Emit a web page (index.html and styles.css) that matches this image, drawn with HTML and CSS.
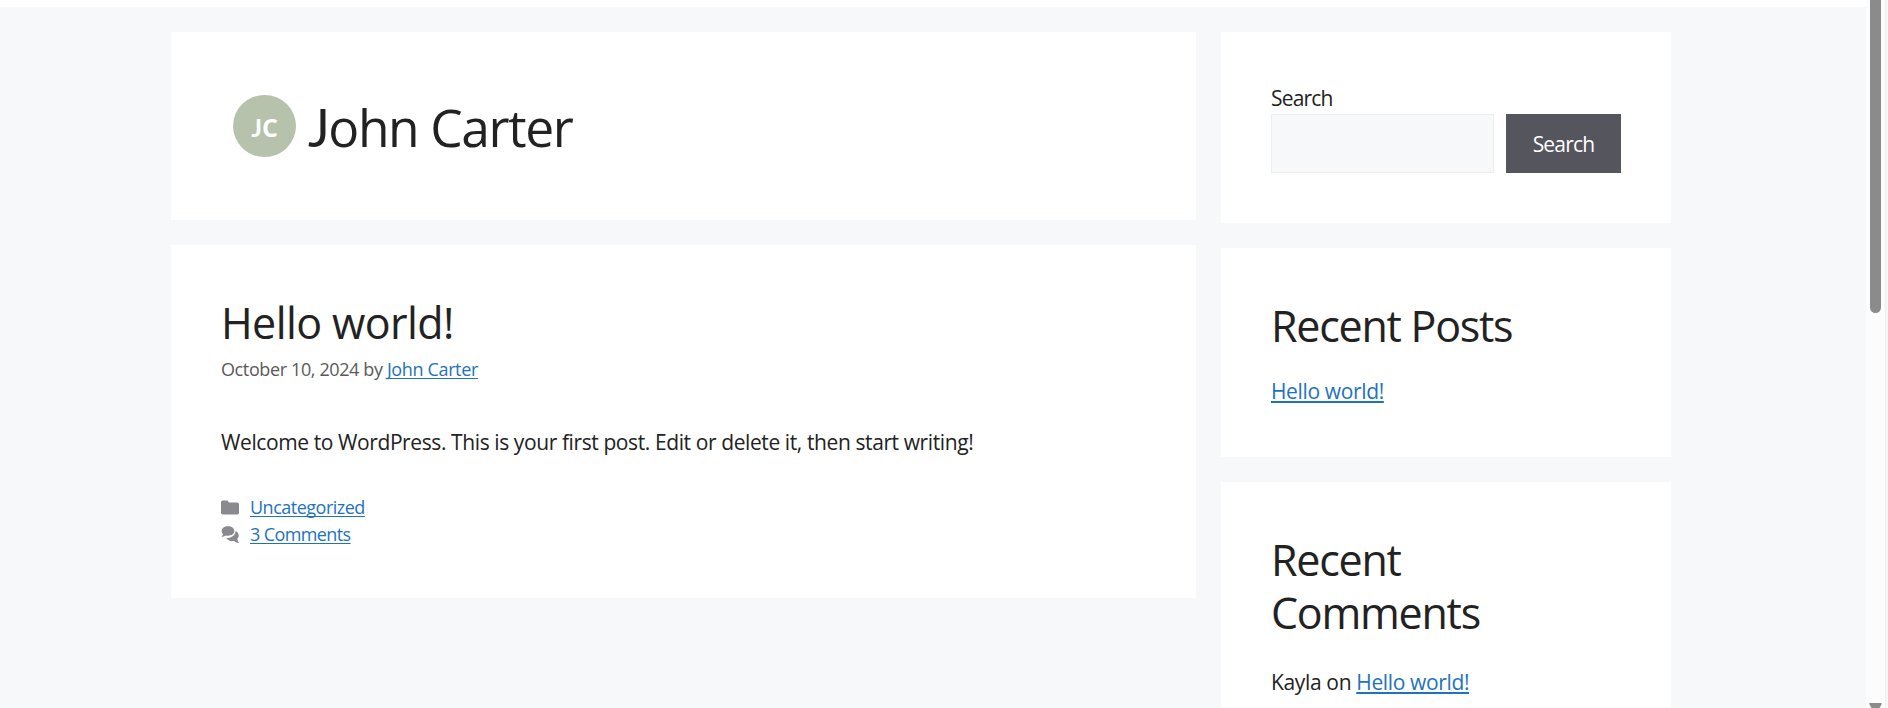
FILE: index.html
```html
<!DOCTYPE html>
<html lang="en">
<head>
<meta charset="utf-8">
<title>John Carter</title>
<link rel="stylesheet" href="styles.css">
</head>
<body>
<div class="page">
  <div class="container">
    <main class="content">
      <header class="card author">
        <div class="avatar"><div class="initials">JC</div></div>
        <h1 class="author-name">John Carter</h1>
      </header>
      <article class="card post">
        <h2 class="heading post-title">Hello world!</h2>
        <div class="meta">October 10, 2024 by <a class="meta-link" href="#">John Carter</a></div>
        <p class="text">Welcome to WordPress. This is your first post. Edit or delete it, then start writing!</p>
        <footer class="footer">
          <div class="foot-row">
            <svg class="icon" viewBox="0 0 18 18"><path fill="currentColor" d="M0 3.300Q0 1.500 1.800 1.500H6Q7.300 1.500 7.300 2.800Q7.300 3.500 8.300 3.500H16.200Q18 3.500 18 5.300V13.700Q18 15.500 16.200 15.500H1.800Q0 15.500 0 13.700Z"/></svg>
            <a href="#">Uncategorized</a>
          </div>
          <div class="foot-row">
            <svg class="icon" viewBox="0 0 18 18"><path fill="currentColor" d="M7 .2C10.700 .2 13.300 2.100 13.300 5S10.700 9.700 7 9.700C6.200 9.700 5.400 9.600 4.700 9.400C3.500 10.300 2 10.800.5 10.800C1.300 10 1.800 9 2 8.100C1.100 7.200.7 6.200.7 5C.7 2.100 3.300.2 7 .2Z"/><path fill="currentColor" d="M14.400 5.100C16.400 5.900 17.700 7.500 17.700 9.500C17.700 10.800 17.200 11.900 16.300 12.800C16.400 14.200 17 15.600 17.900 17C16 17 14.300 16.300 13 15.100C9.700 15.600 6.400 14.500 5.400 12.100C10.600 12.300 14.700 9.300 14.400 5.100Z"/></svg>
            <a class="comments-link" href="#">3 Comments</a>
          </div>
        </footer>
      </article>
    </main>
    <aside class="sidebar">
      <section class="card search">
        <label class="search-label" for="q">Search</label>
        <div class="search-row">
          <input class="search-input" id="q" type="text">
          <button class="search-button">Search</button>
        </div>
      </section>
      <section class="card recent">
        <h2 class="heading">Recent Posts</h2>
        <p class="entry"><a href="#">Hello world!</a></p>
      </section>
      <section class="card comments">
        <h2 class="heading">Recent<br>Comments</h2>
        <p class="entry"><span class="commenter">Kayla on</span> <a href="#">Hello world!</a></p>
      </section>
    </aside>
  </div>
  <div class="scrollbar"><div class="thumb"></div><svg class="arrow" width="13" height="5" viewBox="0 0 13 5"><path fill="#8b8b8b" d="M1 0H12Q13 0 12.700 1L10.500 5H2.500L.3 1Q0 0 1 0Z"/></svg></div>
</div>
</body>
</html>
```
FILE: styles.css
```css
* { box-sizing: border-box; }
body { margin: 0; background: #f7f8fa; color: #222; font: 21px/32px "Open Sans", "Noto Sans", sans-serif; overflow: hidden; }
h1, h2, p { margin: 0; font-weight: 400; }
a { color: #1e73be; text-underline-offset: 2px; text-decoration-thickness: 1px; text-decoration-skip-ink: none; }
.page { display: flex; height: 708px; background: linear-gradient(#fff 7px, #f7f8fa 7px); overflow: hidden; }
.container { display: grid; grid-template-columns: 1025px 450px; gap: 25px; margin-left: 171px; padding-top: 32px; align-items: start; }
.content, .sidebar { display: flex; flex-direction: column; gap: 25px; }
.card { background: #fff; padding: 50px; }
.author { display: flex; height: 188px; padding: 63px 62px; gap: 12px; }
.avatar { width: 63px; height: 62px; border-radius: 50%; background: #b6c2ac; display: flex; align-items: center; justify-content: center; color: #fff; font-weight: 700; font-size: 25px; padding-top: 2px; }
.initials::first-letter, .author-name::first-letter { font-family: Lato, sans-serif; }
.author-name { font-size: 51.5px; line-height: 65px; letter-spacing: -1.4px; }
.heading { font-size: 43px; line-height: 53px; letter-spacing: -1.25px; padding-top: 1px; }
.post-title { letter-spacing: -0.6px; }
.post { height: 353px; }
.meta { font-size: 18px; line-height: 27px; color: #595959; padding-top: 7px; letter-spacing: -0.38px; }
.meta-link { letter-spacing: -0.36px; }
.text { margin-top: 43px; letter-spacing: -0.4px; }
.footer { margin-top: 36px; font-size: 18px; line-height: 27px; letter-spacing: -0.5px; }
.foot-row { display: flex; align-items: center; gap: 11px; }
.icon { width: 18px; height: 18px; color: #8a8990; }
.comments-link { letter-spacing: -0.6px; }
.search-label { display: block; letter-spacing: -0.8px; }
.search { height: 191px; }
.search-row { display: flex; gap: 12px; }
.search-input { width: 223px; height: 59px; border: 1px solid #eee; background: #f7f8fa; }
.search-button { width: 115px; height: 59px; border: 0; background: #55555e; color: #fff; font: inherit; padding: 0; letter-spacing: -0.8px; }
.recent { height: 209px; }
.comments { height: 300px; }
.entry { margin-top: 23px; letter-spacing: -0.36px; }
.comments .entry { margin-top: 27px; }
.commenter { letter-spacing: -0.35px; }
.entry a { text-decoration-thickness: 2px; }
.scrollbar { display: flex; flex-direction: column; justify-content: space-between; margin-left: 195px; width: 22px; height: 708px; background: linear-gradient(to right, #fcfcfc 19px, #ebebeb 19px, #f8f8f8 21px); }
.thumb { margin-left: 4px; width: 11px; height: 313px; background: #8b8b8b; border-radius: 0 0 6px 6px; }
.arrow { display: block; margin-left: 3px; }
```
